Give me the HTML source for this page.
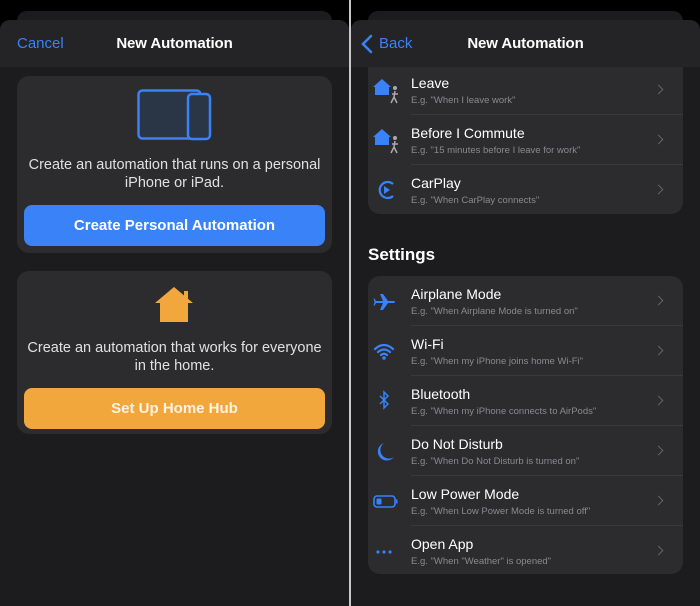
<!DOCTYPE html>
<html><head><meta charset="utf-8"><style>
*{margin:0;padding:0;box-sizing:border-box}
body{width:700px;height:606px;background:#000;position:relative;overflow:hidden;font-family:"Liberation Sans",sans-serif;color:#fff}
.panel{position:absolute;top:0;height:606px;width:349px;background:#000;overflow:hidden}
.ghost{position:absolute;left:17px;right:17px;top:11px;height:20px;background:#1c1c1e;border-radius:10px}
.sheet{position:absolute;left:0;right:0;top:20px;bottom:0;background:#1c1c1e;border-radius:10px 10px 0 0;overflow:hidden}
.nav{position:absolute;left:0;right:0;top:0;height:47px;background:#242426;z-index:2}
.nav .t{position:absolute;width:100%;text-align:center;top:15px;font-size:15px;font-weight:bold;letter-spacing:-0.1px}
.nav .l{position:absolute;left:17px;top:15px;font-size:15px;color:#3a82f7}
.card{position:absolute;left:17px;right:17px;background:#2c2c2e;border-radius:12px}
.cap{position:absolute;left:0;right:0;text-align:center;font-size:14.5px;line-height:18px;color:#e0e0e0}
.btn{position:absolute;left:7px;right:7px;height:41px;border-radius:8px;text-align:center;line-height:41px;font-size:15px;font-weight:bold}
.row{position:absolute;left:0;right:0;height:50px}
.row .ti{position:absolute;left:43px;top:10px;font-size:14px;color:#fff}
.row .su{position:absolute;left:43px;top:30px;font-size:9.5px;color:#8a8a8e}
.row .ch{position:absolute;right:21px;top:21px;width:7px;height:7px;border-right:1.5px solid #636366;border-top:1.5px solid #636366;transform:rotate(45deg)}
.row .sep{position:absolute;left:43px;right:0;bottom:0;height:1px;background:#3a3a3c}
.row svg{position:absolute;left:5px;top:13px}
</style></head><body>
<div class="panel" style="left:0">
 <div class="ghost"></div>
 <div class="sheet">
  <div class="nav"><div class="l">Cancel</div><div class="t">New Automation</div></div>
  <div class="card" style="top:56px;height:177px">
   <svg style="position:absolute;left:120px;top:13px" width="76" height="52" viewBox="0 0 76 52"><rect x="1.5" y="1.5" width="62" height="48" rx="4" fill="#2a3546" stroke="#3a82f7" stroke-width="2.5"/><rect x="51" y="5" width="22" height="45" rx="4" fill="#2a3546" stroke="#3a82f7" stroke-width="2.5"/></svg>
   <div class="cap" style="top:80px">Create an automation that runs on a personal<br>iPhone or iPad.</div>
   <div class="btn" style="top:129px;background:#3a82f7">Create Personal Automation</div>
  </div>
  <div class="card" style="top:251px;height:163px">
   <svg style="position:absolute;left:137px;top:14px" width="40" height="38" viewBox="0 0 40 38"><path d="M20 2 L39 18 L34 18 L34 37 L6 37 L6 18 L1 18 Z" fill="#f2a73c"/><rect x="30" y="6" width="4" height="8" fill="#f2a73c"/></svg>
   <div class="cap" style="top:68px">Create an automation that works for everyone<br>in the home.</div>
   <div class="btn" style="top:117px;background:#f2a73c;color:#fdf3e2">Set Up Home Hub</div>
  </div>
 </div>
</div>
<div style="position:absolute;left:349px;top:0;width:2px;height:606px;background:#c8c8c8"></div>
<div class="panel" style="left:351px">
 <div class="ghost"></div>
 <div class="sheet">
  <div class="nav"><div class="l" style="left:28px">Back</div><svg style="position:absolute;left:10px;top:14px" width="12" height="20" viewBox="0 0 12 20"><path d="M10 2 L2 10 L10 18" fill="none" stroke="#3a82f7" stroke-width="2.5" stroke-linecap="round"/></svg><div class="t">New Automation</div></div>
  <div class="card" style="top:30px;height:164px">
   <div class="row" style="top:15px"><svg width="30" height="26" viewBox="0 0 30 26"><path d="M9 1 L18 9 L16 9 L16 17 L2 17 L2 9 L0 9 Z" fill="#3a82f7"/><circle cx="22" cy="10" r="2" fill="#aaa"/><path d="M22 13 L21 19 L18 25 M21 19 L24 25 M19 16 L25 16" stroke="#aaa" stroke-width="1.5" fill="none"/></svg><div class="ti">Leave</div><div class="su">E.g. "When I leave work"</div><div class="ch"></div><div class="sep"></div></div>
   <div class="row" style="top:65px"><svg width="30" height="26" viewBox="0 0 30 26"><path d="M9 1 L18 9 L16 9 L16 17 L2 17 L2 9 L0 9 Z" fill="#3a82f7"/><circle cx="22" cy="10" r="2" fill="#aaa"/><path d="M22 13 L21 19 L18 25 M21 19 L24 25 M19 16 L25 16" stroke="#aaa" stroke-width="1.5" fill="none"/></svg><div class="ti">Before I Commute</div><div class="su">E.g. "15 minutes before I leave for work"</div><div class="ch"></div><div class="sep"></div></div>
   <div class="row" style="top:115px"><svg width="30" height="26" viewBox="0 0 30 26"><path d="M20 6 A8 8 0 1 0 20 18" fill="none" stroke="#3a82f7" stroke-width="2.2"/><path d="M11 8 L17 12 L11 16 Z" fill="#3a82f7"/></svg><div class="ti">CarPlay</div><div class="su">E.g. "When CarPlay connects"</div><div class="ch"></div></div>
  </div>
  <div style="position:absolute;left:17px;top:225px;font-size:17px;font-weight:bold">Settings</div>
  <div class="card" style="top:256px;height:298px">
   <div class="row" style="top:0"><svg width="30" height="26" viewBox="0 0 30 26"><path d="M3 12 L10 12 L7 5 L10 5 L15 12 L21 12 Q23 13 21 14 L15 14 L10 21 L7 21 L10 14 L3 14 L1.5 16.5 L0.5 16.5 L1.5 13 L0.5 9.5 L1.5 9.5 Z" fill="#3a82f7"/></svg><div class="ti">Airplane Mode</div><div class="su">E.g. "When Airplane Mode is turned on"</div><div class="ch"></div><div class="sep"></div></div>
   <div class="row" style="top:50px"><svg width="30" height="26" viewBox="0 0 30 26"><path d="M2 10 Q11 2 20 10 M5 13 Q11 8 17 13 M8 16 Q11 13.5 14 16" fill="none" stroke="#3a82f7" stroke-width="2.2" stroke-linecap="round"/><circle cx="11" cy="19" r="1.8" fill="#3a82f7"/></svg><div class="ti">Wi-Fi</div><div class="su">E.g. "When my iPhone joins home Wi-Fi"</div><div class="ch"></div><div class="sep"></div></div>
   <div class="row" style="top:100px"><svg width="30" height="26" viewBox="0 0 30 26"><path d="M7 7 L15 15 L11 19 L11 3 L15 7 L7 15" fill="none" stroke="#3a82f7" stroke-width="1.5"/></svg><div class="ti">Bluetooth</div><div class="su">E.g. "When my iPhone connects to AirPods"</div><div class="ch"></div><div class="sep"></div></div>
   <div class="row" style="top:150px"><svg width="30" height="26" viewBox="0 0 30 26"><path d="M11 4 A9 9 0 1 0 21 18 A7 7 0 0 1 11 4 Z" fill="#3a82f7"/></svg><div class="ti">Do Not Disturb</div><div class="su">E.g. "When Do Not Disturb is turned on"</div><div class="ch"></div><div class="sep"></div></div>
   <div class="row" style="top:200px"><svg width="30" height="26" viewBox="0 0 30 26"><rect x="1" y="7" width="21" height="11" rx="3" fill="none" stroke="#3a82f7" stroke-width="1.6"/><rect x="3.5" y="9.5" width="5" height="6" rx="1" fill="#3a82f7"/><rect x="23" y="10.5" width="1.5" height="4" fill="#3a82f7"/></svg><div class="ti">Low Power Mode</div><div class="su">E.g. "When Low Power Mode is turned off"</div><div class="ch"></div><div class="sep"></div></div>
   <div class="row" style="top:250px"><svg width="30" height="26" viewBox="0 0 30 26"><circle cx="5" cy="13" r="1.6" fill="#3a82f7"/><circle cx="11" cy="13" r="1.6" fill="#3a82f7"/><circle cx="17" cy="13" r="1.6" fill="#3a82f7"/></svg><div class="ti">Open App</div><div class="su">E.g. "When "Weather" is opened"</div><div class="ch"></div></div>
  </div>
 </div>
</div>
</body></html>
